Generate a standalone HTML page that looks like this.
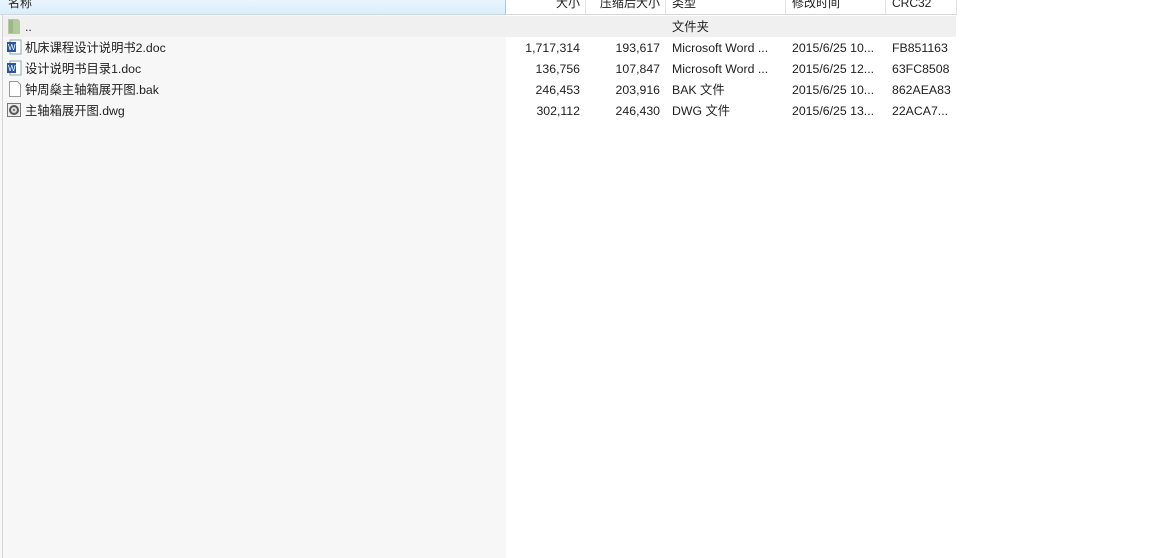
<!DOCTYPE html>
<html><head><meta charset="utf-8"><style>
body{margin:0;width:1159px;height:558px;background:#fff;position:relative;overflow:hidden;font-family:"Liberation Sans","Microsoft YaHei","Noto Sans CJK SC",sans-serif;font-size:12px;color:#1e1e1e}
.col0{position:absolute;left:0;top:0;width:506px;height:558px;background:#f7f7f7}
.ledge{position:absolute;left:2px;top:0;width:1px;height:558px;background:#d5d5d5}
.hdr{position:absolute;top:0;height:14px;border-bottom:1px solid #d5d5d5;border-right:1px solid #e3e3e3;background:#fff;overflow:hidden}
.hdr span{position:absolute;top:-4px;line-height:14px;white-space:nowrap}
.r{position:absolute;height:21px;line-height:23px;white-space:nowrap;font-size:12.3px}
.sel{position:absolute;left:3px;top:16px;width:953px;height:21px;background:#f0f0f0}
.n{text-align:right}
</style></head><body>
<div class="col0"></div>
<div class="sel"></div>
<div class="ledge"></div>
<div class="hdr" style="left:0;width:505px;background:linear-gradient(#eaf5fd,#d9eefb);border-right:1px solid #9fcbec"><span style="left:8px">名称</span></div>
<div class="hdr" style="left:506px;width:79px"><span style="right:5px">大小</span></div>
<div class="hdr" style="left:586px;width:79px"><span style="right:5px">压缩后大小</span></div>
<div class="hdr" style="left:666px;width:119px"><span style="left:6px">类型</span></div>
<div class="hdr" style="left:786px;width:99px"><span style="left:6px">修改时间</span></div>
<div class="hdr" style="left:886px;width:70px"><span style="left:6px">CRC32</span></div>

<svg style="position:absolute;left:6px;top:18px" width="16" height="17"><path d="M2 1h10l2 2v13H2z" fill="#b5c99e"/><path d="M3 2h4v13H3z" fill="#9db886"/></svg>
<div class="r" style="left:25px;top:16px">..</div>
<div class="r" style="left:672px;top:16px">文件夹</div>

<svg style="position:absolute;left:6px;top:39px" width="16" height="16"><rect x="4" y="1" width="11" height="14" fill="#fff" stroke="#8aa"/><rect x="1" y="3" width="9" height="10" fill="#2b579a"/><text x="2" y="11" font-size="8" fill="#fff" font-family="Liberation Sans">W</text></svg>
<div class="r" style="left:25px;top:37px">机床课程设计说明书2.doc</div>
<svg style="position:absolute;left:6px;top:60px" width="16" height="16"><rect x="4" y="1" width="11" height="14" fill="#fff" stroke="#8aa"/><rect x="1" y="3" width="9" height="10" fill="#2b579a"/><text x="2" y="11" font-size="8" fill="#fff" font-family="Liberation Sans">W</text></svg>
<div class="r" style="left:25px;top:58px">设计说明书目录1.doc</div>
<svg style="position:absolute;left:7px;top:81px" width="16" height="16"><path d="M2.5 .5h8l3 3v12h-11z" fill="#fff" stroke="#999"/></svg>
<div class="r" style="left:25px;top:79px">钟周燊主轴箱展开图.bak</div>
<svg style="position:absolute;left:6px;top:102px" width="16" height="16"><rect x="1.5" y="1.5" width="13" height="13" fill="#eee" stroke="#777"/><circle cx="8" cy="8" r="5" fill="#555"/><circle cx="8" cy="8" r="3" fill="#ddd"/><circle cx="8" cy="8" r="1" fill="#555"/></svg>
<div class="r" style="left:25px;top:100px">主轴箱展开图.dwg</div>

<div class="r n" style="left:506px;width:74px;top:37px">1,717,314</div>
<div class="r n" style="left:506px;width:74px;top:58px">136,756</div>
<div class="r n" style="left:506px;width:74px;top:79px">246,453</div>
<div class="r n" style="left:506px;width:74px;top:100px">302,112</div>
<div class="r n" style="left:586px;width:74px;top:37px">193,617</div>
<div class="r n" style="left:586px;width:74px;top:58px">107,847</div>
<div class="r n" style="left:586px;width:74px;top:79px">203,916</div>
<div class="r n" style="left:586px;width:74px;top:100px">246,430</div>
<div class="r" style="left:672px;top:37px">Microsoft Word ...</div>
<div class="r" style="left:672px;top:58px">Microsoft Word ...</div>
<div class="r" style="left:672px;top:79px">BAK 文件</div>
<div class="r" style="left:672px;top:100px">DWG 文件</div>
<div class="r" style="left:792px;top:37px">2015/6/25 10...</div>
<div class="r" style="left:792px;top:58px">2015/6/25 12...</div>
<div class="r" style="left:792px;top:79px">2015/6/25 10...</div>
<div class="r" style="left:792px;top:100px">2015/6/25 13...</div>
<div class="r" style="left:892px;top:37px">FB851163</div>
<div class="r" style="left:892px;top:58px">63FC8508</div>
<div class="r" style="left:892px;top:79px">862AEA83</div>
<div class="r" style="left:892px;top:100px">22ACA7...</div>
</body></html>
